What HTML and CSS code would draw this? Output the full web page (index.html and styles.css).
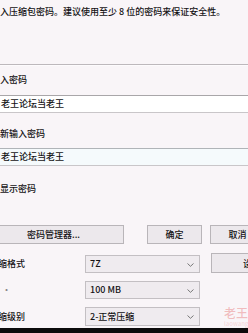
FILE: index.html
```html
<!DOCTYPE html>
<html>
<head>
  <title>设置密码</title>
  <link rel="stylesheet" href="styles.css">
</head>
<body>
  <div class="dialog">
    <p class="hint">入压缩包密码。建议使用至少 8 位的密码来保证安全性。</p>
    <div class="sep"></div>

    <label class="label first">入密码</label>
    <div class="field">老王论坛当老王</div>

    <label class="label second">新输入密码</label>
    <div class="field alt">老王论坛当老王</div>

    <div class="check">显示密码</div>

    <div class="actions">
      <button class="btn manager">密码管理器...</button>
      <button class="btn ok">确定</button>
      <button class="btn cancel">取消</button>
    </div>
  </div>

  <div class="options">
    <span class="opt-label">缩格式</span>
    <div class="select">7Z
      <svg class="chev" width="7" height="4" viewBox="0 0 7 4"><path d="M0.5 0.5 L3.5 3.3 L6.5 0.5" fill="none" stroke="#777" stroke-width="1"/></svg>
    </div>
    <button class="btn setup">设置...</button>

    <span class="opt-label dot">·</span>
    <div class="select">100 MB
      <svg class="chev" width="7" height="4" viewBox="0 0 7 4"><path d="M0.5 0.5 L3.5 3.3 L6.5 0.5" fill="none" stroke="#777" stroke-width="1"/></svg>
    </div>
    <span></span>

    <span class="opt-label">缩级别</span>
    <div class="select tall">2-正常压缩
      <svg class="chev" width="7" height="4" viewBox="0 0 7 4"><path d="M0.5 0.5 L3.5 3.3 L6.5 0.5" fill="none" stroke="#777" stroke-width="1"/></svg>
    </div>
    <span></span>
  </div>

  <div class="mark">老王<small>laowang</small></div>
  <div class="footer"></div>
</body>
</html>
```

FILE: styles.css
```css
body {
  margin: 0;
  width: 248px;
  height: 333px;
  overflow: hidden;
  position: relative;
  background-color: #f9f5f8;
  font-family: "Noto Sans CJK SC", "Noto Sans", sans-serif;
  font-size: 9px;
  font-weight: 500;
  line-height: 12px;
  color: #141214;
}

.dialog {
  display: flex;
  flex-direction: column;
}

.hint {
  margin: 6px 0 0 0;
  white-space: nowrap;
}

.sep {
  margin-top: 46px;
  height: 1px;
  background-color: #bdb8bc;
  box-shadow: 0 1px 0 #fdfbfd;
}

.label {
  display: block;
  white-space: nowrap;
}

.label.first {
  margin-top: 9px;
}

.label.second {
  margin-top: 15px;
}

.field {
  margin-top: 9px;
  width: 270px;
  height: 16px;
  line-height: 16px;
  padding-left: 1px;
  background-color: #ffffff;
  border-top: 1px solid #a9a6a9;
  border-bottom: 1px solid #c9c6c9;
  white-space: nowrap;
}

.field.alt {
  margin-top: 8px;
  background-color: #f5fafc;
  border-top-color: #b0b4b8;
}

.check {
  margin-top: 17px;
  white-space: nowrap;
}

.actions {
  display: flex;
  margin-top: 30px;
  height: 19px;
}

.btn {
  font-family: inherit;
  font-size: 9px;
  font-weight: 500;
  color: #141214;
  background-color: #ece8ec;
  border: 1px solid #b9b5b9;
  border-radius: 0;
  padding: 0;
  height: 19px;
  flex-shrink: 0;
  white-space: nowrap;
}

.manager {
  margin-left: -17px;
  width: 141px;
}

.ok {
  margin-left: 23px;
  width: 55px;
}

.cancel {
  margin-left: 8px;
  width: 55px;
}

.options {
  display: grid;
  grid-template-columns: 85px 115px 70px;
  grid-template-rows: 18px 18px 19px;
  row-gap: 8px;
  margin-top: 11px;
  align-items: center;
}

.opt-label {
  margin-left: -2px;
  white-space: nowrap;
}

.opt-label.dot {
  margin-left: 2px;
  color: #8a868a;
}

.select {
  position: relative;
  height: 100%;
  box-sizing: border-box;
  padding-left: 4px;
  line-height: 16px;
  background-color: #efebef;
  border: 1px solid #c3bfc3;
  white-space: nowrap;
}

.select.tall {
  line-height: 17px;
}

.chev {
  position: absolute;
  right: 5px;
  top: 7px;
}

.setup {
  margin-left: 11px;
  width: 70px;
  text-align: left;
  padding-left: 31px;
  margin-top: -2px;
  height: 20px;
}

.mark {
  position: absolute;
  left: 224px;
  top: 306px;
  font-size: 12px;
  line-height: 14px;
  color: rgba(225, 80, 80, 0.35);
  white-space: nowrap;
}

.mark small {
  display: block;
  font-size: 6px;
  line-height: 8px;
  color: rgba(225, 80, 80, 0.2);
}

.footer {
  position: absolute;
  left: 0;
  bottom: 0;
  width: 100%;
  height: 5px;
  background-color: #0c0b0c;
}
```
